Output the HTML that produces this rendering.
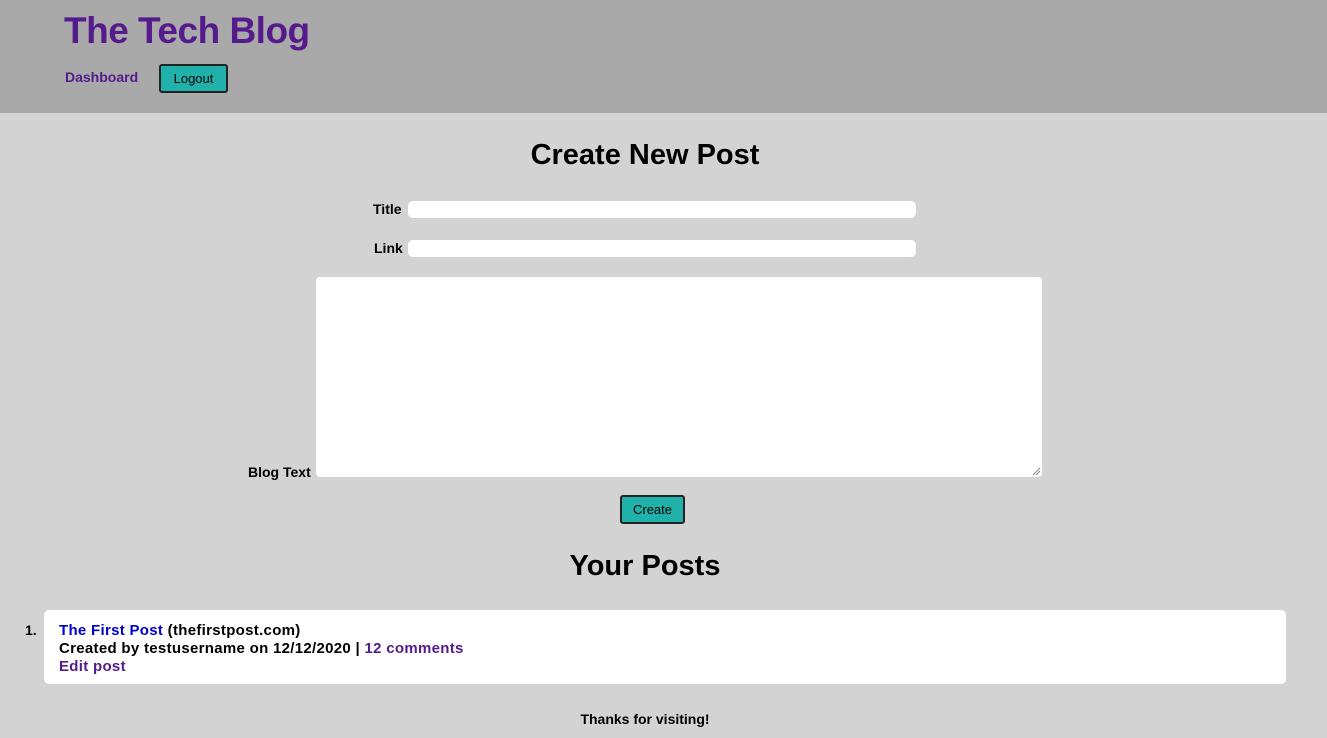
<!DOCTYPE html>
<html><head><meta charset="utf-8"><style>
*{margin:0;padding:0;box-sizing:border-box}
body{width:1327px;height:738px;background:#d3d3d3;font-family:"Liberation Sans",Arial,sans-serif;font-weight:bold;position:relative;overflow:hidden;color:#000}
.a{position:absolute;white-space:nowrap}
header{position:absolute;left:0;top:0;width:1327px;height:113px;background:#a9a9a9}
.btn{position:absolute;background:#20b2aa;border:2px solid #222;border-radius:3px;font-size:13px;font-weight:normal;color:#000;text-align:center}
.inp{position:absolute;background:#fff;border-radius:5px}
</style></head><body>
<header>
<div class="a" style="left:64px;top:10px;font-size:37px;color:#551a8b;letter-spacing:-0.5px">The Tech Blog</div>
<div class="a" style="left:65px;top:69px;font-size:14px;color:#551a8b">Dashboard</div>
<div class="btn" style="left:159px;top:64px;width:69px;height:29px;line-height:25px">Logout</div>
</header>
<div class="a" style="left:0;width:1290px;top:139px;text-align:center;font-size:29px">Create New Post</div>
<div class="a" style="left:373px;top:201px;font-size:14px">Title</div>
<div class="inp" style="left:408px;top:201px;width:508px;height:17px"></div>
<div class="a" style="left:374px;top:240px;font-size:14px">Link</div>
<div class="inp" style="left:408px;top:240px;width:508px;height:17px"></div>
<div class="a" style="left:248px;top:464px;font-size:14px">Blog Text</div>
<div class="inp" style="left:316px;top:277px;width:726px;height:200px;border-radius:4px"></div>
<svg class="a" style="left:1032px;top:467px" width="9" height="9"><path d="M1 8L8 1M4 8L8 4" stroke="#888" stroke-width="1"/></svg>
<div class="btn" style="left:620px;top:495px;width:65px;height:29px;line-height:25px">Create</div>
<div class="a" style="left:0;width:1290px;top:550px;text-align:center;font-size:29px">Your Posts</div>
<div class="a" style="left:25px;top:622px;font-size:14px">1.</div>
<div class="inp" style="left:44px;top:610px;width:1242px;height:74px"></div>
<div class="a" style="left:59px;top:622px;font-size:15px;letter-spacing:0.3px;line-height:18px"><span style="color:#0000cd">The First Post</span> (thefirstpost.com)<br>Created by testusername on 12/12/2020 | <span style="color:#551a8b">12 comments</span><br><span style="color:#551a8b">Edit post</span></div>
<div class="a" style="left:0;width:1290px;top:711px;text-align:center;font-size:14px">Thanks for visiting!</div>
</body></html>
